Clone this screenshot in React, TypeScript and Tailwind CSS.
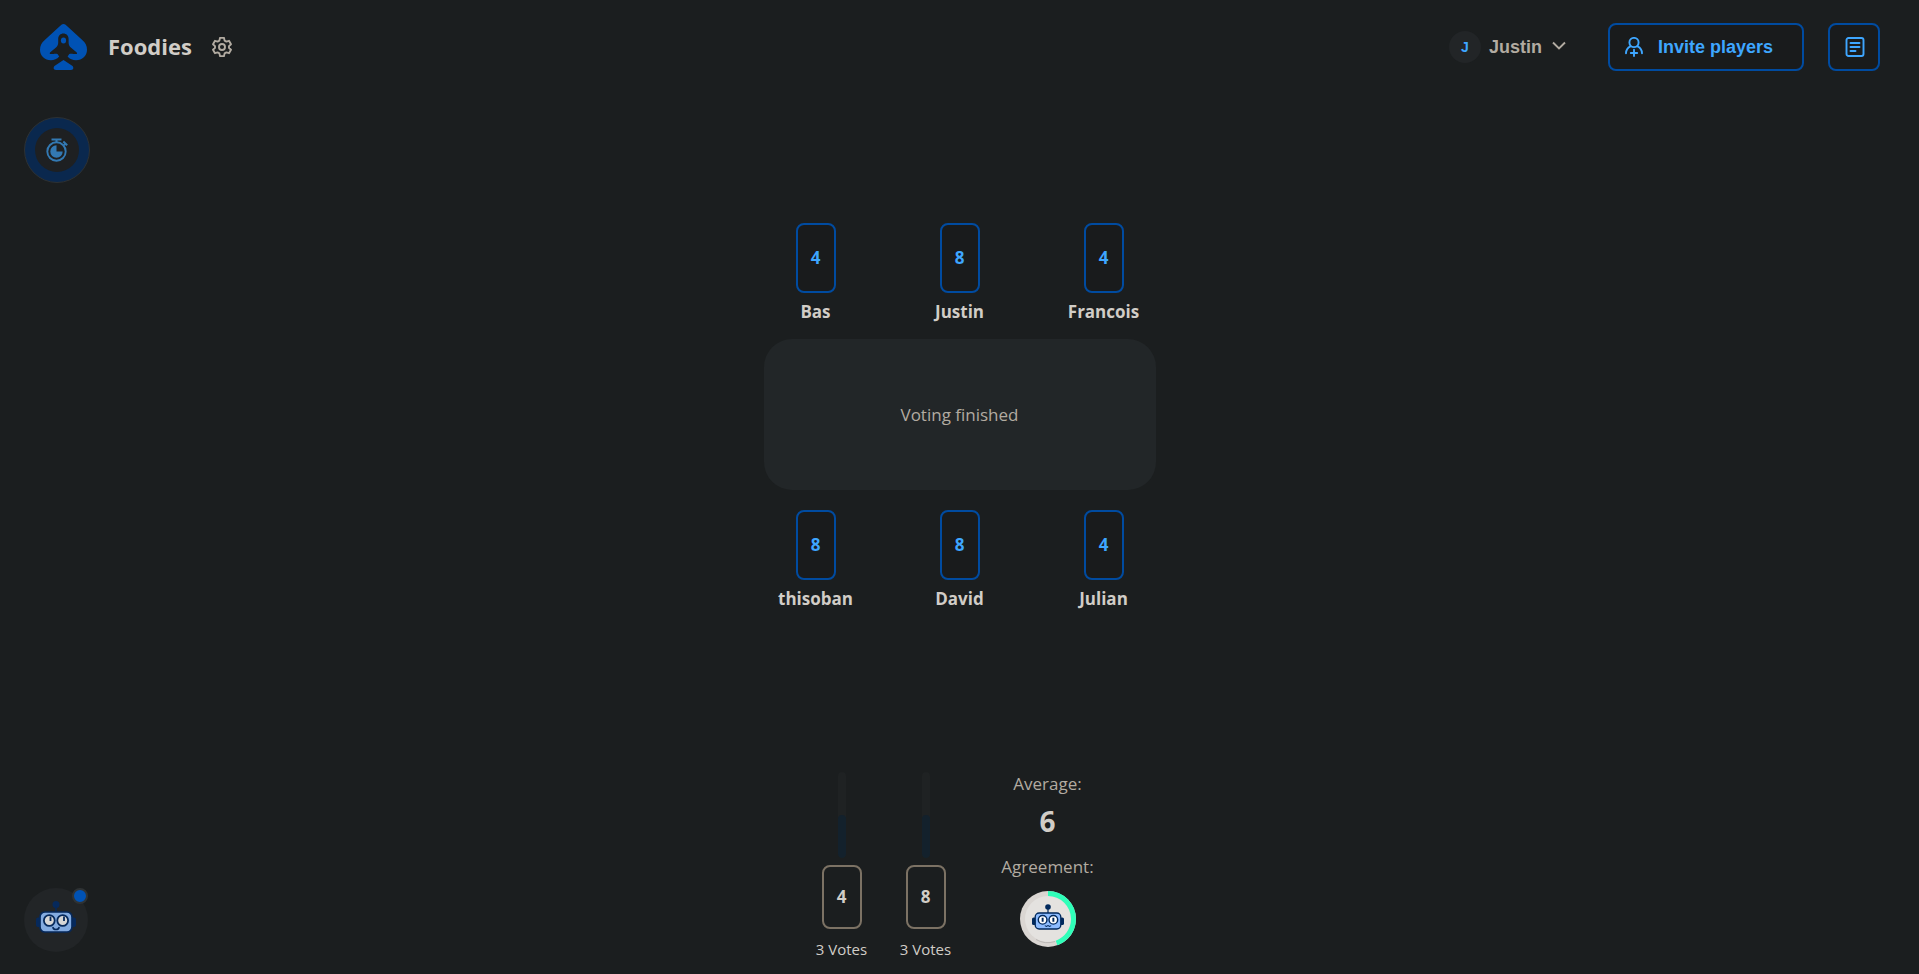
const tableText = "font-['Open_Sans','Noto_Sans',sans-serif]";

type Player = { name: string; vote: string };
type Tally = { vote: string; count: number; share: number };

const topRow: Player[] = [
  { name: "Bas", vote: "4" },
  { name: "Justin", vote: "8" },
  { name: "Francois", vote: "4" },
];
const bottomRow: Player[] = [
  { name: "thisoban", vote: "8" },
  { name: "David", vote: "8" },
  { name: "Julian", vote: "4" },
];
const tallies: Tally[] = [
  { vote: "4", count: 3, share: 50 },
  { vote: "8", count: 3, share: 50 },
];

function Logo() {
  return (
    <svg className="h-[46px] w-[47px]" viewBox="0 0 47 46" fill="#0052b4" aria-hidden="true">
      <path d="M21.4.8c1.2-1 3-1 4.200 0L42.500 16.300C45.500 19 47 22 47 25.800c0 6-4.800 10.500-11 10.500-3.300 0-6.300-1.300-8.400-3.800l1.700-2.500c1.300-.5 2.700-.4 4 .1l3.500-.2c.5-.6.2-1.200-.3-1.700l-5.700-4.600c-1.500-1.300-2.200-3-2.200-5v-3.600c0-3.300-2.300-5.500-5.200-5.500s-5.200 2.200-5.200 5.500v3.600c0 2-.7 3.700-2.200 5l-5.700 4.600c-.5.5-.8 1.100-.3 1.700l3.500.2c1.300-.5 2.700-.6 4-.1l1.700 2.500c-2.100 2.500-5.100 3.800-8.400 3.800C4.800 36.300 0 31.800 0 25.800 0 22 1.500 19 4.500 16.300z" />
      <ellipse cx="23.500" cy="16.500" rx="2.600" ry="2.900" />
      <path d="M23.500 36l8.300 5.500c2.300 1.500 2 4.500-.8 4.500H16c-2.800 0-3.100-3-.8-4.500z" />
    </svg>
  );
}

function Gear() {
  return (
    <svg className="size-5" viewBox="0 0 20 20" fill="none" stroke="#b2aba1" strokeWidth="1.900" strokeLinejoin="round" aria-hidden="true">
      <path d="M8 .9h4l.6 2.700 1.800 1 2.600-.8 2 3.400-2 1.900v1.800l2 1.900-2 3.400-2.600-.8-1.800 1-.6 2.700H8l-.6-2.700-1.800-1-2.600.8-2-3.400 2-1.900V9.100L1 7.200l2-3.400 2.600.8 1.800-1z" />
      <circle cx="10" cy="10" r="3" />
    </svg>
  );
}

function AddPlayer() {
  return (
    <svg className="h-5 w-[18px]" viewBox="0 0 18 20" fill="none" stroke="#3ea6ff" strokeWidth="1.900" strokeLinecap="round" aria-hidden="true">
      <circle cx="9" cy="5.500" r="4.600" />
      <path d="M1 16.300c0-3.300 1.700-5.700 4.500-7M17 16.300c0-3.300-1.700-5.700-4.500-7" />
      <path d="M9 12.800v6.200M5.800 16h6.400" />
    </svg>
  );
}

function Notes() {
  return (
    <svg className="size-5" viewBox="0 0 20 20" fill="none" stroke="#3ea6ff" strokeWidth="1.900" strokeLinecap="round" aria-hidden="true">
      <rect x="1.500" y="1" width="17" height="18" rx="2" />
      <path d="M5.500 6h9M5.500 10h9M5.500 14h5" />
    </svg>
  );
}

function Stopwatch() {
  return (
    <svg className="h-6 w-[22px]" viewBox="0 0 22 24" fill="none" stroke="#3379b3" aria-hidden="true">
      <circle cx="10.500" cy="13.500" r="9.200" strokeWidth="1.900" />
      <path d="M5.500 1.500h10" strokeWidth="2" />
      <path d="M10.500 1.500v3" strokeWidth="2" />
      <path d="M17.300 3.600l3.900 3.600M18 7.200l1.800-1.900" strokeWidth="2" />
      <path d="M10.500 13.500V7.300a6.200 6.200 0 1 0 6.200 6.200z" fill="#3379b3" stroke="none" />
    </svg>
  );
}

function Robot({ smiling }: { smiling?: boolean }) {
  const navy = smiling ? "#06295b" : "#01295c";
  const face = smiling ? "#83abe0" : "#8dbcff";
  const white = smiling ? "#d6d6d6" : "#ffffff";
  return (
    <svg className={smiling ? "h-8 w-10" : "h-[26px] w-8"} viewBox="0 0 40 32" aria-hidden="true">
      <circle cx="20" cy="3.500" r="3.500" fill={navy} />
      <path d="M20 5v6" stroke={navy} strokeWidth="1.500" />
      <rect x="0" y="16.500" width="5" height="9.500" rx="2" fill={navy} />
      <rect x="35" y="16.500" width="5" height="9.500" rx="2" fill={navy} />
      <rect x="4" y="11" width="32" height="20" rx="5" fill={face} stroke={navy} strokeWidth="1.700" />
      <circle cx="13.300" cy="19.500" r="5.400" fill={white} stroke={navy} strokeWidth="1.800" />
      <circle cx="26.700" cy="19.500" r="5.400" fill={white} stroke={navy} strokeWidth="1.800" />
      {smiling ? (
        <>
          <path d="M14.500 15.500v4.500M28 15.500v4.500" stroke={navy} strokeWidth="1.800" />
          <path d="M17 26.500c.5 2.600 5.500 2.600 6 0" fill="none" stroke={navy} strokeWidth="1.600" strokeLinecap="round" />
        </>
      ) : (
        <>
          <path d="M13.300 17v5M26.700 17v5" stroke={navy} strokeWidth="2.400" />
          <path d="M16 26.800l2 .9 2-.9 2 .9 2-.9" fill="none" stroke={navy} strokeWidth="1.300" />
        </>
      )}
    </svg>
  );
}

function PlayerRow({ players }: { players: Player[] }) {
  return (
    <ul className="flex">
      {players.map((p) => (
        <li key={p.name} className="flex w-36 flex-col items-center gap-[7px]">
          <div className="flex h-[70px] w-10 items-center justify-center rounded-lg border-2 border-[#004ba0] bg-[#191b1c] text-[17px] font-bold text-[#3ea6ff]">
            {p.vote}
          </div>
          <span className="text-[17px] leading-6 font-bold text-[#d1cdc7]">{p.name}</span>
        </li>
      ))}
    </ul>
  );
}

export default function App() {
  return (
    <div className={`flex min-h-screen flex-col bg-[#1b1e1f] ${tableText}`}>
      <header className="flex items-center justify-between pt-[23px] pr-[39px] pl-10">
        <div className="flex items-center">
          <Logo />
          <h1 className="mb-0.5 ml-[21px] text-[22px] leading-8 font-bold text-[#d1cdc7]">Foodies</h1>
          <button type="button" aria-label="Game settings" className="ml-5">
            <Gear />
          </button>
        </div>
        <div className="flex items-center gap-6 font-['Liberation_Sans',Arial,sans-serif] text-lg font-bold">
          <button type="button" className="mr-[18px] flex items-center gap-2 text-[#b2aba1]">
            <span className="flex size-8 items-center justify-center rounded-full bg-[#222527] text-sm text-[#3ea6ff]">J</span>
            Justin
            <svg className="mb-1 ml-0.5 h-[9px] w-[14px]" viewBox="0 0 14 9" fill="none" stroke="#b2aba1" strokeWidth="1.900" aria-hidden="true">
              <path d="M1 1.500l6 6 6-6" />
            </svg>
          </button>
          <button type="button" className="flex h-12 w-[196px] items-center gap-[15px] rounded-lg border-2 border-[#004ba0] bg-[#191b1c] pl-[15px] text-[#3ea6ff]">
            <AddPlayer />
            Invite players
          </button>
          <button type="button" aria-label="Issues" className="flex h-12 w-[52px] items-center justify-center rounded-lg border-2 border-[#004ba0] bg-[#191b1c] pl-0.5">
            <Notes />
          </button>
        </div>
      </header>

      <div className="px-6 pt-[46px]">
        <button
          type="button"
          aria-label="Timer"
          className="flex size-[66px] items-center justify-center rounded-full border border-[#2d3133] bg-[#0a284e]"
        >
          <span className="flex size-11 items-center justify-center rounded-full bg-[#1e2022]">
            <Stopwatch />
          </span>
        </button>
      </div>

      <main className="flex flex-1 flex-col items-center pt-10">
        <PlayerRow players={topRow} />
        <div className="mt-[15px] mb-5 flex h-[151px] w-[392px] items-center justify-center rounded-[28px] bg-[#222628] text-[17px] text-[#b2aba1]">
          Voting finished
        </div>
        <PlayerRow players={bottomRow} />
      </main>

      <footer className="grid grid-cols-[1fr_auto_1fr] items-end px-6">
        <button
          type="button"
          aria-label="Assistant"
          className="relative mb-[22px] flex size-16 items-center justify-center rounded-full bg-[#222527] pb-1.5"
        >
          <Robot smiling />
          <span className="absolute top-0 right-0 size-4 rounded-full border-2 border-[#2f3335] bg-[#0052b4]" />
        </button>
        <section aria-label="Results" className="flex items-start pr-4 pb-[15px]">
          {tallies.map((t) => (
            <div key={t.vote} className="flex w-[84px] flex-col items-center">
              <div className="flex h-[86px] w-2 items-end overflow-hidden rounded-full bg-[#1f2223]">
                <div className="w-full rounded-full bg-[#13212c]" style={{ height: `${t.share}%` }} />
              </div>
              <div className="mt-[7px] flex h-16 w-10 items-center justify-center rounded-lg border-2 border-[#7c7264] text-[17px] font-bold text-[#d1cdc7]">
                {t.vote}
              </div>
              <span className="mt-2.5 text-[15px] leading-5 text-[#d1cdc7]">{t.count} Votes</span>
            </div>
          ))}
          <div className="ml-6 flex w-[112px] flex-col items-center text-[17px] leading-6 text-[#b2aba1]">
            <span>Average:</span>
            <strong className="mt-[7px] text-[28px] leading-9 text-[#d1cdc7]">6</strong>
            <span className="mt-4">Agreement:</span>
            <div className="relative mt-3 flex size-14 items-center justify-center">
              <svg className="absolute inset-0 size-14" viewBox="0 0 56 56" aria-hidden="true">
                <circle cx="28" cy="28" r="28" fill="#dad6d2" />
                <circle cx="28" cy="28" r="23" fill="#e4e2df" />
                <path d="M16 48.500a23.500 23.500 0 0 0 19 2" fill="none" stroke="#b3b0ad" strokeWidth="0.800" />
                <circle
                  cx="28"
                  cy="28"
                  r="25.500"
                  fill="none"
                  stroke="#2fffb9"
                  strokeWidth="5"
                  pathLength="100"
                  strokeDasharray="44.500 55.500"
                  transform="rotate(-90 28 28)"
                />
              </svg>
              <span className="relative mb-1 flex">
                <Robot />
              </span>
            </div>
          </div>
        </section>
      </footer>
    </div>
  );
}
